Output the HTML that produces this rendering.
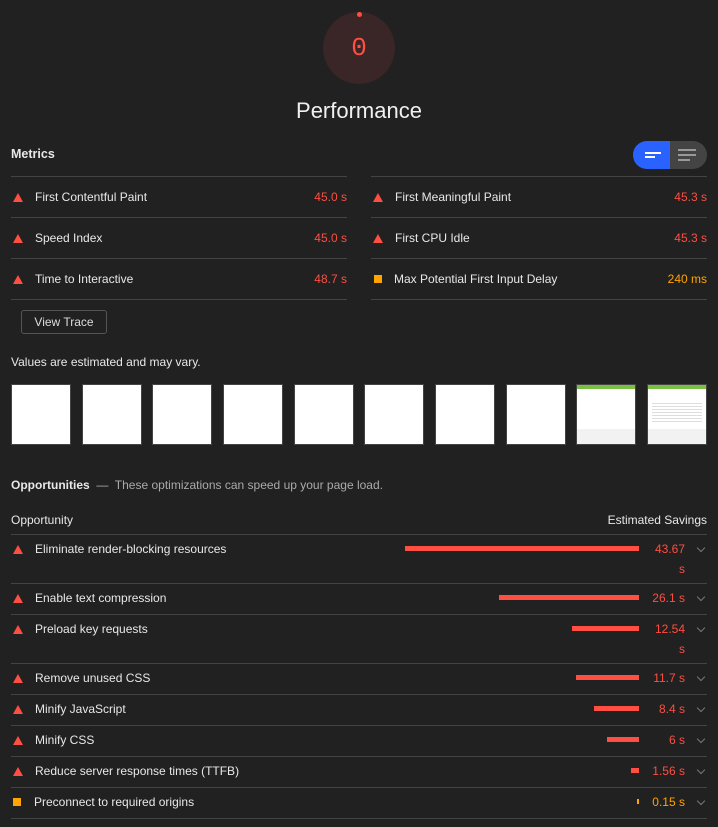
<!DOCTYPE html>
<html><head><style>
*{margin:0;padding:0;box-sizing:border-box}
body{width:718px;height:827px;background:#212121;color:#e8e8e8;font-family:"Liberation Sans",sans-serif;font-size:12px;position:relative;overflow:hidden}
.a{position:absolute;white-space:nowrap}
.l{position:absolute;height:1px;background:#444}
.tri{position:absolute;width:0;height:0;border-left:5px solid transparent;border-right:5px solid transparent;border-bottom:9px solid #ff4e42}
.sq{position:absolute;width:8px;height:8px;background:#ffa400}
.red{color:#ff4e42}.org{color:#ffa400}
.bar{position:absolute;height:5px;background:#ff4e42}
.th{position:absolute;top:384px;width:60px;height:61px;background:#fff;border:1px solid #444}
.chev{position:absolute;width:6px;height:6px;border-right:1.3px solid #777;border-bottom:1.3px solid #777;transform:rotate(45deg)}
.two{position:absolute;right:33px;top:539px;line-height:20px;text-align:right;color:#ff4e42}
</style></head><body>
<div class="a" style="left:323px;top:12px;width:72px;height:72px;border-radius:50%;background:#3a2626"></div>
<div class="a" style="left:357px;top:12px;width:5px;height:5px;border-radius:50%;background:#ff4e42"></div>
<div class="a red" style="left:323px;top:33px;width:72px;text-align:center;font-family:'Liberation Mono',monospace;font-size:26px">0</div>
<div class="a" style="left:0;top:98px;width:718px;text-align:center;font-size:22px;color:#f0f0f0">Performance</div>
<div class="a" style="left:11px;top:147px;font-weight:bold;font-size:12.5px">Metrics</div>
<div class="a" style="left:633px;top:141px;width:74px;height:28px;border-radius:14px;background:#444;overflow:hidden">
<div class="a" style="left:0;top:0;width:37px;height:28px;background:#2962ff"></div>
<div class="a" style="left:12px;top:11px;width:16px;height:2px;background:#fff"></div>
<div class="a" style="left:12px;top:15px;width:10px;height:2px;background:#fff"></div>
<div class="a" style="left:45px;top:8px;width:18px;height:2px;background:#999"></div>
<div class="a" style="left:45px;top:13px;width:18px;height:2px;background:#999"></div>
<div class="a" style="left:45px;top:18px;width:12px;height:2px;background:#999"></div>
</div>
<div class="l" style="left:11px;top:176px;width:336px"></div><div class="l" style="left:371px;top:176px;width:336px"></div>
<div class="l" style="left:11px;top:217px;width:336px"></div><div class="l" style="left:371px;top:217px;width:336px"></div>
<div class="l" style="left:11px;top:258px;width:336px"></div><div class="l" style="left:371px;top:258px;width:336px"></div>
<div class="l" style="left:11px;top:299px;width:336px"></div><div class="l" style="left:371px;top:299px;width:336px"></div>
<div class="tri" style="left:13px;top:193px"></div><div class="a" style="left:35px;top:190px">First Contentful Paint</div><div class="a red" style="right:371px;top:190px">45.0 s</div>
<div class="tri" style="left:373px;top:193px"></div><div class="a" style="left:395px;top:190px">First Meaningful Paint</div><div class="a red" style="right:11px;top:190px">45.3 s</div>
<div class="tri" style="left:13px;top:234px"></div><div class="a" style="left:35px;top:231px">Speed Index</div><div class="a red" style="right:371px;top:231px">45.0 s</div>
<div class="tri" style="left:373px;top:234px"></div><div class="a" style="left:395px;top:231px">First CPU Idle</div><div class="a red" style="right:11px;top:231px">45.3 s</div>
<div class="tri" style="left:13px;top:275px"></div><div class="a" style="left:35px;top:272px">Time to Interactive</div><div class="a red" style="right:371px;top:272px">48.7 s</div>
<div class="sq" style="left:374px;top:275px"></div><div class="a" style="left:394px;top:272px">Max Potential First Input Delay</div><div class="a org" style="right:11px;top:272px">240 ms</div>
<div class="a" style="left:21px;top:310px;width:86px;height:24px;border:1px solid #555;border-radius:3px;text-align:center;line-height:22px;color:#ddd">View Trace</div>
<div class="a" style="left:11px;top:355px">Values are estimated and may vary.</div>
<div class="th" style="left:11px"></div><div class="th" style="left:82px"></div><div class="th" style="left:152px"></div><div class="th" style="left:223px"></div><div class="th" style="left:294px"></div><div class="th" style="left:364px"></div><div class="th" style="left:435px"></div><div class="th" style="left:506px"></div>
<div class="th" style="left:576px;background:#fff"><div class="a" style="left:0;top:0;width:58px;height:4px;background:#7ac143"></div><div class="a" style="left:0;top:44px;width:58px;height:15px;background:#f2f2f2"></div></div>
<div class="th" style="left:647px"><div class="a" style="left:0;top:0;width:58px;height:4px;background:#7ac143"></div><div class="a" style="left:4px;top:16px;width:50px;height:22px;background:repeating-linear-gradient(#fff 0 2px,#ddd 2px 3px)"></div><div class="a" style="left:0;top:44px;width:58px;height:15px;background:#f2f2f2"></div></div>
<div class="a" style="left:11px;top:478px"><b>Opportunities</b> <span style="color:#aaa">&nbsp;—&nbsp; These optimizations can speed up your page load.</span></div>
<div class="a" style="left:11px;top:513px">Opportunity</div><div class="a" style="right:11px;top:513px">Estimated Savings</div>
<div class="l" style="left:11px;top:534px;width:696px"></div>
<div class="l" style="left:11px;top:583px;width:696px"></div>
<div class="l" style="left:11px;top:614px;width:696px"></div>
<div class="l" style="left:11px;top:663px;width:696px"></div>
<div class="l" style="left:11px;top:694px;width:696px"></div>
<div class="l" style="left:11px;top:725px;width:696px"></div>
<div class="l" style="left:11px;top:756px;width:696px"></div>
<div class="l" style="left:11px;top:787px;width:696px"></div>
<div class="l" style="left:11px;top:818px;width:696px"></div>

<div class="tri" style="left:13px;top:545px"></div><div class="a" style="left:35px;top:542px">Eliminate render-blocking resources</div><div class="bar" style="left:405px;top:546px;width:234px"></div><div class="two" style="top:539px">43.67<br>s</div><div class="chev" style="left:698px;top:545px"></div>
<div class="tri" style="left:13px;top:594px"></div><div class="a" style="left:35px;top:591px">Enable text compression</div><div class="bar" style="left:499px;top:595px;width:140px"></div><div class="a red" style="right:33px;top:591px">26.1 s</div><div class="chev" style="left:698px;top:594px"></div>
<div class="tri" style="left:13px;top:625px"></div><div class="a" style="left:35px;top:622px">Preload key requests</div><div class="bar" style="left:572px;top:626px;width:67px"></div><div class="two" style="top:619px">12.54<br>s</div><div class="chev" style="left:698px;top:625px"></div>
<div class="tri" style="left:13px;top:674px"></div><div class="a" style="left:35px;top:671px">Remove unused CSS</div><div class="bar" style="left:576px;top:675px;width:63px"></div><div class="a red" style="right:33px;top:671px">11.7 s</div><div class="chev" style="left:698px;top:674px"></div>
<div class="tri" style="left:13px;top:705px"></div><div class="a" style="left:35px;top:702px">Minify JavaScript</div><div class="bar" style="left:594px;top:706px;width:45px"></div><div class="a red" style="right:33px;top:702px">8.4 s</div><div class="chev" style="left:698px;top:705px"></div>
<div class="tri" style="left:13px;top:736px"></div><div class="a" style="left:35px;top:733px">Minify CSS</div><div class="bar" style="left:607px;top:737px;width:32px"></div><div class="a red" style="right:33px;top:733px">6 s</div><div class="chev" style="left:698px;top:736px"></div>
<div class="tri" style="left:13px;top:767px"></div><div class="a" style="left:35px;top:764px">Reduce server response times (TTFB)</div><div class="bar" style="left:631px;top:768px;width:8px"></div><div class="a red" style="right:33px;top:764px">1.56 s</div><div class="chev" style="left:698px;top:767px"></div>
<div class="sq" style="left:13px;top:798px"></div><div class="a" style="left:34px;top:795px">Preconnect to required origins</div><div class="bar" style="left:637px;top:799px;width:2px;background:#ffa400"></div><div class="a org" style="right:33px;top:795px">0.15 s</div><div class="chev" style="left:698px;top:798px"></div>
</body></html>
